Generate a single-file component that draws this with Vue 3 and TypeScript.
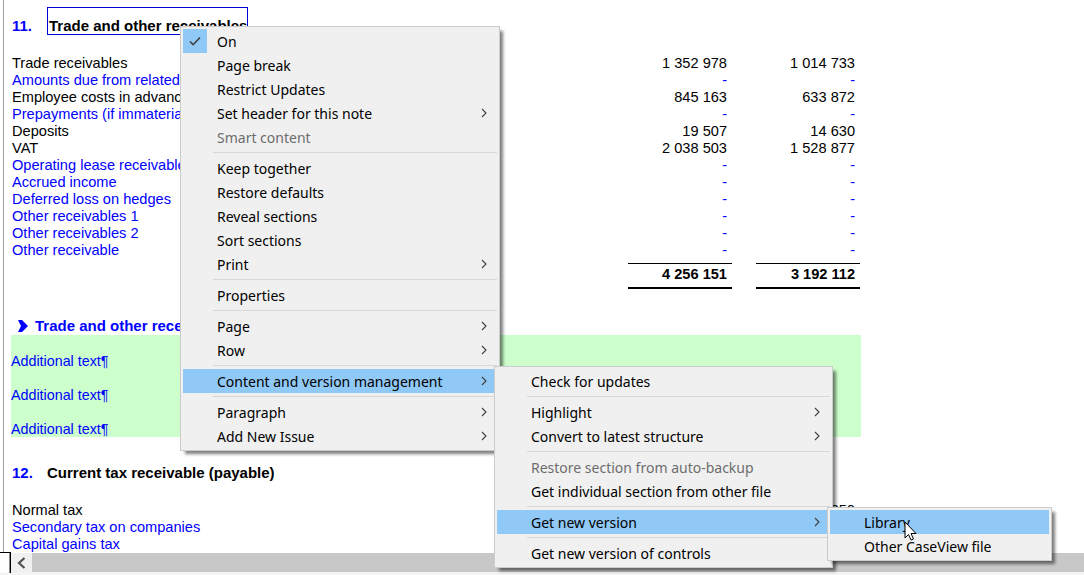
<template>
  <div class="window">
    <div class="doc">
      <div class="heading first">
        <span class="num">11.</span>
        <span class="title boxed">Trade and other receivables</span>
      </div>

      <div class="rows">
        <div v-for="row in rows" :key="row.label" :class="['row', { blue: row.blue }]">
          <span>{{ row.label }}</span>
          <span class="val">{{ row.a }}</span>
          <span class="val">{{ row.b }}</span>
        </div>
        <div class="row total">
          <span></span>
          <span class="val">4 256 151</span>
          <span class="val">3 192 112</span>
        </div>
      </div>

      <div class="section-title">
        <svg class="section-arrow" width="10" height="12" viewBox="0 0 10 12">
          <polygon points="0,0 4,0 10,6 4,12 0,12 3,6" fill="#0000ff" />
        </svg>
        <span>Trade and other receivables</span>
      </div>
      <div class="green">
        <p v-for="n in 3" :key="n">Additional text¶</p>
      </div>

      <div class="heading second">
        <span class="num">12.</span>
        <span class="title">Current tax receivable (payable)</span>
      </div>

      <div class="rows tax">
        <div v-for="row in taxRows" :key="row.label" :class="['row', { blue: row.blue }]">
          <span>{{ row.label }}</span>
          <span class="val">{{ row.a }}</span>
          <span class="val">{{ row.b }}</span>
        </div>
      </div>
    </div>

    <div class="scrollbar">
      <div class="scroll-corner"></div>
      <div class="scroll-btn">
        <svg width="9" height="12" viewBox="0 0 9 12">
          <path d="M7.5 1 L2 6 L7.5 11" fill="none" stroke="#505050" stroke-width="2.2" />
        </svg>
      </div>
    </div>
    <div class="status"></div>

    <ul
      v-for="menu in menus"
      :key="menu.name"
      :class="['menu', menu.name]"
    >
      <template v-for="(item, i) in menu.items" :key="i">
        <li v-if="item.sep" class="sep"></li>
        <li
          v-else
          :class="['item', { hot: item.hot, off: item.off }]"
        >
          <span v-if="item.check" class="check">
            <svg width="14" height="12" viewBox="0 0 14 12">
              <path d="M2 6.5 L5.2 9.7 L12 2.5" fill="none" stroke="#3c3c3c" stroke-width="1.6" />
            </svg>
          </span>
          <span class="label">{{ item.text }}</span>
          <svg v-if="item.sub" class="chev" width="6" height="10" viewBox="0 0 6 10">
            <path d="M1 1 L5 5 L1 9" fill="none" stroke="#404040" stroke-width="1.1" />
          </svg>
        </li>
      </template>
    </ul>

    <svg class="cursor" width="14" height="21" viewBox="0 0 14 21">
      <path d="M1 1 L1 17 L4.5 13.5 L7 19 L9.5 18 L7 12.5 L12 12.5 Z" fill="#fff" stroke="#000" stroke-width="1" stroke-linejoin="round" />
    </svg>
  </div>
</template>

<script setup lang="ts">
interface Row {
  label: string;
  a?: string;
  b?: string;
  blue?: boolean;
}
interface MenuItem {
  text?: string;
  sep?: boolean;
  sub?: boolean;
  hot?: boolean;
  off?: boolean;
  check?: boolean;
}

const rows: Row[] = [
  { label: 'Trade receivables', a: '1 352 978', b: '1 014 733' },
  { label: 'Amounts due from related parties', a: '-', b: '-', blue: true },
  { label: 'Employee costs in advance', a: '845 163', b: '633 872' },
  { label: 'Prepayments (if immaterial)', a: '-', b: '-', blue: true },
  { label: 'Deposits', a: '19 507', b: '14 630' },
  { label: 'VAT', a: '2 038 503', b: '1 528 877' },
  { label: 'Operating lease receivable', a: '-', b: '-', blue: true },
  { label: 'Accrued income', a: '-', b: '-', blue: true },
  { label: 'Deferred loss on hedges', a: '-', b: '-', blue: true },
  { label: 'Other receivables 1', a: '-', b: '-', blue: true },
  { label: 'Other receivables 2', a: '-', b: '-', blue: true },
  { label: 'Other receivable', a: '-', b: '-', blue: true },
];

const taxRows: Row[] = [
  { label: 'Normal tax', b: '850' },
  { label: 'Secondary tax on companies', blue: true },
  { label: 'Capital gains tax', blue: true },
];

const menus: { name: string; items: MenuItem[] }[] = [
  {
    name: 'main',
    items: [
      { text: 'On', check: true },
      { text: 'Page break' },
      { text: 'Restrict Updates' },
      { text: 'Set header for this note', sub: true },
      { text: 'Smart content', off: true },
      { sep: true },
      { text: 'Keep together' },
      { text: 'Restore defaults' },
      { text: 'Reveal sections' },
      { text: 'Sort sections' },
      { text: 'Print', sub: true },
      { sep: true },
      { text: 'Properties' },
      { sep: true },
      { text: 'Page', sub: true },
      { text: 'Row', sub: true },
      { sep: true },
      { text: 'Content and version management', sub: true, hot: true },
      { sep: true },
      { text: 'Paragraph', sub: true },
      { text: 'Add New Issue', sub: true },
    ],
  },
  {
    name: 'content',
    items: [
      { text: 'Check for updates' },
      { sep: true },
      { text: 'Highlight', sub: true },
      { text: 'Convert to latest structure', sub: true },
      { sep: true },
      { text: 'Restore section from auto-backup', off: true },
      { text: 'Get individual section from other file' },
      { sep: true },
      { text: 'Get new version', sub: true, hot: true },
      { sep: true },
      { text: 'Get new version of controls' },
    ],
  },
  {
    name: 'version',
    items: [
      { text: 'Library', hot: true },
      { text: 'Other CaseView file' },
    ],
  },
];
</script>

<style>
html,
body {
  margin: 0;
  background: #fff;
}
</style>

<style scoped>
.window {
  position: relative;
  width: 1084px;
  height: 575px;
  overflow: hidden;
  display: flex;
  flex-direction: column;
  background: #fff;
  font-family: "Liberation Sans", Arial, sans-serif;
  font-size: 14.6px;
  line-height: 17px;
  color: #000;
}
.doc {
  height: 552px;
  flex: none;
  margin-left: 3px;
  padding-left: 8px;
  border-left: 1px solid #a0a0a0;
  overflow: hidden;
}
.heading {
  display: flex;
  height: 17px;
  font-weight: bold;
  font-size: 15px;
  line-height: 15px;
}
.heading.first {
  height: 28px;
  margin-top: 7px;
  align-items: flex-end;
}
.heading.first .num {
  padding-bottom: 2px;
}
.heading.second {
  margin-top: 28px;
}
.num {
  width: 35px;
  color: #0000ff;
}
.boxed {
  width: 201px;
  height: 28px;
  box-sizing: border-box;
  border: 1px solid #0000d0;
  padding: 10px 0 0 1px;
  white-space: nowrap;
}
.rows {
  margin-top: 20px;
}
.row {
  display: grid;
  grid-template-columns: 592px 104px 104px;
  column-gap: 24px;
  height: 17px;
  white-space: nowrap;
}
.blue {
  color: #0000ff;
}
.val {
  text-align: right;
  padding-right: 5px;
}
.total {
  height: 26px;
  margin-top: 4px;
  font-weight: bold;
}
.total .val {
  border-top: 1px solid #000;
  border-bottom: 2px solid #000;
  padding-top: 2px;
  box-sizing: border-box;
  height: 26px;
}
.section-title {
  display: flex;
  align-items: flex-start;
  height: 17px;
  margin-top: 29px;
  padding-left: 6px;
  gap: 7px;
  font-weight: bold;
  font-size: 15px;
  line-height: 15px;
  color: #0000ff;
}
.section-arrow {
  flex: none;
  margin-top: 2px;
}
.green {
  box-sizing: border-box;
  display: flow-root;
  width: 850px;
  height: 102px;
  margin-left: -1px;
  padding-top: 1px;
  background: #ccffcc;
  color: #0000ff;
  font-size: 14.3px;
}
.green p {
  margin: 17px 0 0;
}
.scrollbar {
  display: flex;
  height: 19px;
  flex: none;
  border-top: 1px solid #fff;
  background: #c8c8c8;
}
.scroll-corner {
  width: 11px;
  height: 21px;
  margin-top: -1px;
  position: relative;
  box-sizing: border-box;
  background: #fff;
  border-top: 1px solid #000;
  border-right: 1px solid #000;
  box-shadow: inset -1px 0 0 #8a8a8a;
}
.scroll-btn {
  width: 21px;
  display: flex;
  align-items: center;
  justify-content: center;
  background: #f0f0f0;
}
.status {
  flex: 1;
  background: #f4f4f4;
}
.menu {
  position: absolute;
  margin: 0;
  padding: 2px;
  list-style: none;
  box-sizing: border-box;
  background: #f0f0f0;
  border: 1px solid #cbcbcb;
  box-shadow: 4px 4px 3px -1px rgba(0, 0, 0, 0.5);
  font-family: "Noto Sans", sans-serif;
  font-size: 14px;
}
.main {
  left: 180px;
  top: 26px;
  width: 320px;
  z-index: 1;
}
.content {
  left: 494px;
  top: 366px;
  width: 339px;
  z-index: 2;
}
.version {
  left: 827px;
  top: 507px;
  width: 225px;
  z-index: 3;
}
.item {
  position: relative;
  display: flex;
  align-items: center;
  height: 24px;
  padding-left: 34px;
}
.hot {
  background: #90c8f6;
}
.off {
  color: #6d6d6d;
}
.label {
  white-space: nowrap;
}
.check {
  position: absolute;
  left: 0;
  top: 0;
  width: 24px;
  height: 24px;
  display: flex;
  align-items: center;
  justify-content: center;
  background: #90c8f6;
}
.chev {
  position: absolute;
  right: 10px;
  top: 7px;
}
.sep {
  height: 1px;
  margin: 3px 0 3px 30px;
  background: #d7d7d7;
}
.cursor {
  position: absolute;
  left: 904px;
  top: 521px;
  z-index: 4;
}
</style>
